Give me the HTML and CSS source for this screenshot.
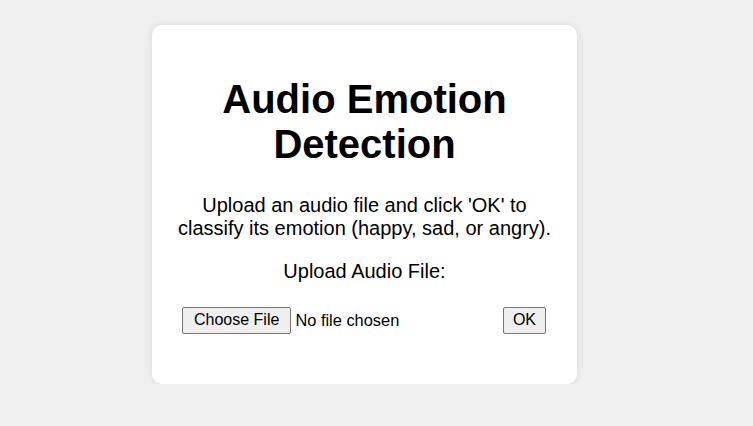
FILE: index.html
```html
<!DOCTYPE html>
<html>
<head>
<meta charset="utf-8">
<title>Audio Emotion Detection</title>
<link rel="stylesheet" href="styles.css">
</head>
<body>
<div class="page">
  <div class="card">
    <h1 class="title">Audio Emotion Detection</h1>
    <p class="intro">Upload an audio file and click 'OK' to classify its emotion (happy, sad, or angry).</p>
    <form class="form">
      <label class="label" for="audio">Upload Audio File:</label>
      <div class="row">
        <input class="file" id="audio" type="file" accept="audio/*">
        <button class="ok" type="button">OK</button>
      </div>
    </form>
  </div>
</div>
</body>
</html>
```
FILE: styles.css
```css
html, body {
  margin: 0;
  padding: 0;
}
body {
  background: #f0f0f0;
  font-family: "Liberation Sans", Arial, sans-serif;
  color: #000;
}
.page {
  padding: 25px 0 0 152px;
}
.card {
  width: 425px;
  box-sizing: border-box;
  background: #fff;
  border-radius: 10px;
  box-shadow: 0 0 10px rgba(0, 0, 0, 0.1);
  padding: 25px 20px 50px;
  text-align: center;
}
.title {
  font-size: 40px;
  font-weight: bold;
  margin: 26.8px 0;
}
.intro {
  font-size: 20px;
  margin: 0;
}
.form {
  margin: 0;
}
.label {
  display: block;
  font-size: 20px;
  margin-top: 20px;
}
.row {
  display: flex;
  justify-content: space-between;
  align-items: center;
  margin: 24px 11px 0 10px;
  font-size: 16px;
}
.file {
  font-family: "Liberation Sans", Arial, sans-serif;
  font-size: 16.4px;
  color: #000;
}
.file::file-selector-button {
  font-family: "Liberation Sans", Arial, sans-serif;
  font-size: 16px;
  height: 27px;
  padding: 0 11px;
  margin-right: 4px;
  border: 1px solid #767676;
  border-radius: 2px;
  background: #efefef;
  color: #000;
}
.ok {
  font-family: "Liberation Sans", Arial, sans-serif;
  font-size: 16px;
  height: 27px;
  padding: 0 9px;
  border: 1px solid #767676;
  border-radius: 2px;
  background: #efefef;
  color: #000;
}
```
